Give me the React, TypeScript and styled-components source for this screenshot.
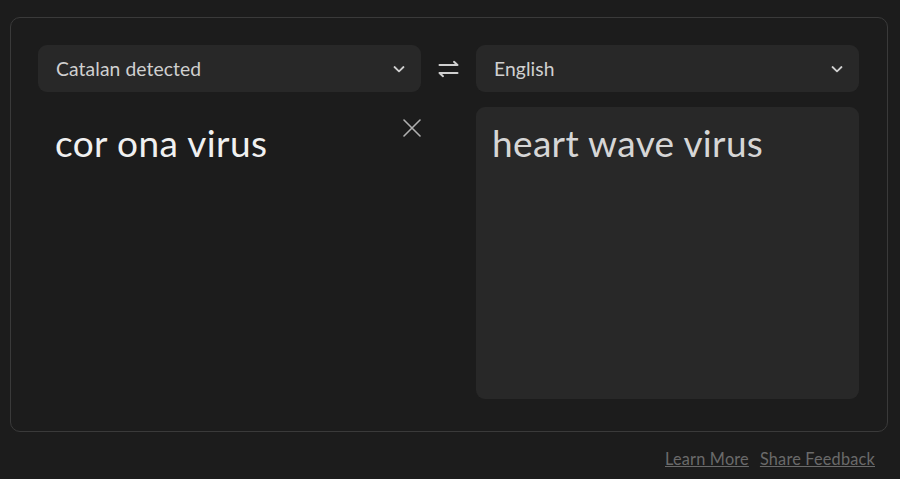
import React from "react";
import styled, { createGlobalStyle } from "styled-components";

const Global = createGlobalStyle`
  html, body { margin: 0; padding: 0; background: #1c1c1c; }
  body { font-family: Lato, "Open Sans", sans-serif; }
  svg { display: block; }
`;

const Page = styled.div`
  width: 900px;
  height: 479px;
  box-sizing: border-box;
  padding: 17px 12px 0 10px;
  display: flex;
  flex-direction: column;
`;

const Panel = styled.div`
  box-sizing: border-box;
  height: 415px;
  border: 1px solid #3a3a3a;
  border-radius: 10px;
  padding: 27px 28px 31px 27px;
  display: grid;
  grid-template-columns: 383px 55px 383px;
  grid-template-rows: 47px 292px;
  row-gap: 15px;
`;

const Select = styled.div`
  background: #282828;
  border-radius: 9px;
  display: flex;
  align-items: center;
  justify-content: space-between;
  padding: 0 16px 0 18px;
  color: #d0d0d0;
  font-size: 19.3px;
  letter-spacing: 0.1px;
`;

const SwapCell = styled.div`
  display: flex;
  align-items: center;
  justify-content: center;
  color: #cfcfcf;
`;

const Source = styled.div`
  position: relative;
  padding: 13px 17px;
  color: #f0f0f0;
  font-size: 37px;
  letter-spacing: 0.4px;
`;

const Clear = styled.div`
  position: absolute;
  top: 12px;
  right: 0;
  color: #b0b0b0;
`;

const Output = styled.div`
  grid-column: 3;
  background: #282828;
  border-radius: 9px;
  padding: 13px 16px;
  color: #d6d6d6;
  font-size: 37px;
  letter-spacing: 0.35px;
`;

const Footer = styled.div`
  display: flex;
  justify-content: flex-end;
  gap: 11px;
  padding: 17px 13px 0 0;
`;

const Link = styled.a`
  color: #6a6a6a;
  font-size: 16.3px;
  letter-spacing: 0.2px;
  text-decoration: underline;
`;

const Chevron = () => (
  <svg width="12" height="8" viewBox="0 0 12 8" fill="none" stroke="currentColor" strokeWidth="1.8" strokeLinecap="round" strokeLinejoin="round">
    <path d="M1.5 2L6 6.3 10.5 2" />
  </svg>
);

export default function App() {
  return (
    <>
      <Global />
      <Page>
        <Panel>
          <Select>
            Catalan detected
            <Chevron />
          </Select>
          <SwapCell>
            <svg width="21" height="18" viewBox="0 0 21 18" fill="none" stroke="currentColor" strokeWidth="2" strokeLinecap="round" strokeLinejoin="round">
              <path d="M1.5 5h18M16 1.8L19.5 5" />
              <path d="M19.5 13h-18M5 16.2L1.5 13" />
            </svg>
          </SwapCell>
          <Select>
            English
            <Chevron />
          </Select>
          <Source>
            cor ona virus
            <Clear>
              <svg width="18" height="18" viewBox="0 0 18 18" fill="none" stroke="currentColor" strokeWidth="1.6" strokeLinecap="round">
                <path d="M1 1l16 16M17 1L1 17" />
              </svg>
            </Clear>
          </Source>
          <Output>heart wave virus</Output>
        </Panel>
        <Footer>
          <Link>Learn More</Link>
          <Link>Share Feedback</Link>
        </Footer>
      </Page>
    </>
  );
}
